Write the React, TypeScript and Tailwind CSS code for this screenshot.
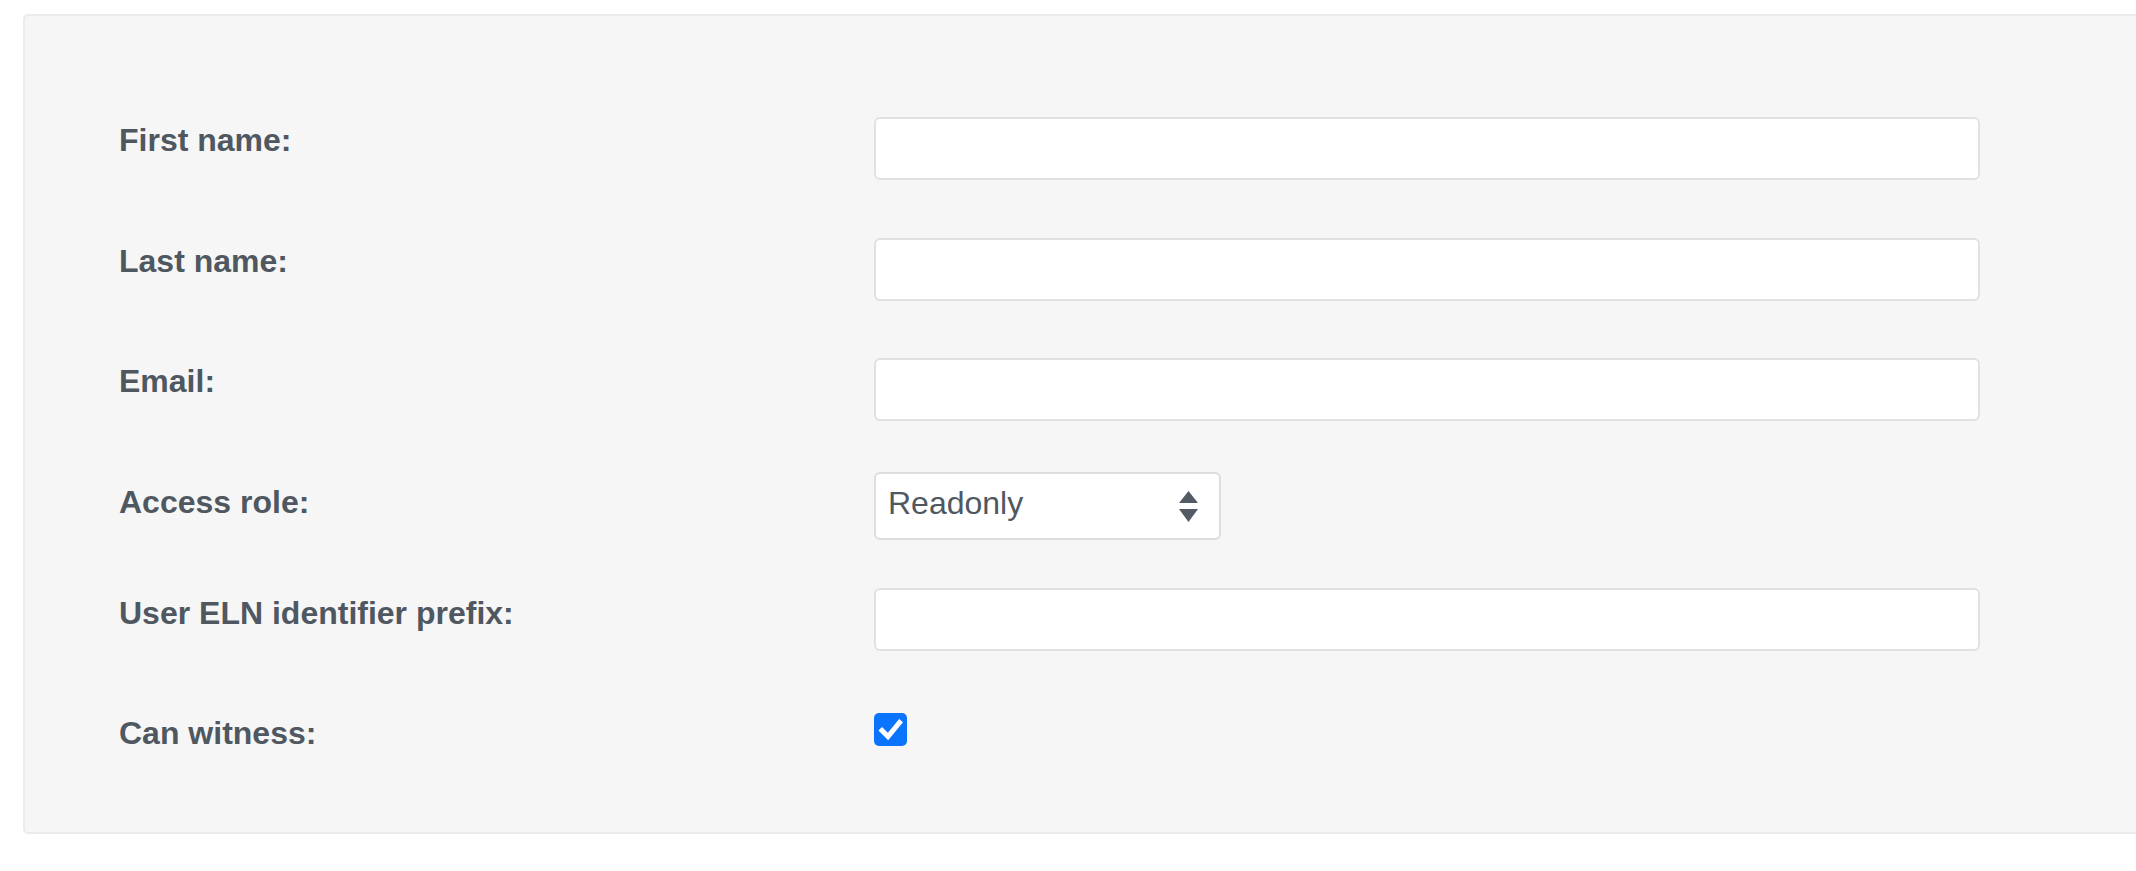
import { ReactNode } from 'react'

const labelCls = "w-[755px] shrink-0 text-[32px] leading-[40px] font-bold text-[#4f5860]"

function Row({ label, labelTop, children, className }: { label: string; labelTop: string; children: ReactNode; className?: string }) {
  return (
    <div className={`flex items-start ${className ?? ''}`}>
      <label className={`${labelCls} ${labelTop}`}>{label}</label>
      {children}
    </div>
  )
}

function TextInput() {
  return (
    <input
      type="text"
      className="w-[1106px] h-[63px] bg-white border-2 border-[#e1e1e1] rounded-md px-4 text-[32px] text-[#495057] focus:outline-none"
    />
  )
}

function SelectBox() {
  return (
    <div className="w-[347px] h-[68px] bg-white border-2 border-[#dedede] rounded-md flex items-center justify-between pl-3 pr-[21px]">
      <span className="text-[32px] text-[#4f5860] leading-none pb-[6px]">Readonly</span>
      <svg width="19" height="31" viewBox="0 0 19 31" className="text-[#525b64]">
        <path d="M9.5 0 L19 12 L0 12 Z" fill="currentColor" />
        <path d="M0 18 L19 18 L9.5 31 Z" fill="currentColor" />
      </svg>
    </div>
  )
}

function Checkbox() {
  return (
    <span className="w-[33px] h-[33px] rounded-[5px] bg-[#0b74fd] flex items-center justify-center">
      <svg width="33" height="33" viewBox="0 0 33 33">
        <path d="M8 17.5 L14 23.5 L25.5 9.5" fill="none" stroke="white" strokeWidth="5" strokeLinecap="square" strokeLinejoin="miter" />
      </svg>
    </span>
  )
}

export default function App() {
  return (
    <div className="w-full h-screen overflow-hidden bg-white font-['Liberation_Sans',Arial,sans-serif] pl-[23px] pt-[14px]">
      <div className="w-[2160px] bg-[#f6f6f6] border-2 border-[#ebebeb] rounded-[5px] pl-[94px] pt-[101px] pb-[79px]">
        <Row label="First name:" labelTop="mt-[3px]" className="mb-[58px]">
          <TextInput />
        </Row>
        <Row label="Last name:" labelTop="mt-[3px]" className="mb-[57px]">
          <TextInput />
        </Row>
        <Row label="Email:" labelTop="mt-[3px]" className="mb-[51px]">
          <TextInput />
        </Row>
        <Row label="Access role:" labelTop="mt-[10px]" className="mb-[48px]">
          <SelectBox />
        </Row>
        <Row label="User ELN identifier prefix:" labelTop="mt-[5px]" className="mb-[62px]">
          <TextInput />
        </Row>
        <Row label="Can witness:" labelTop="mt-0">
          <Checkbox />
        </Row>
      </div>
    </div>
  )
}
